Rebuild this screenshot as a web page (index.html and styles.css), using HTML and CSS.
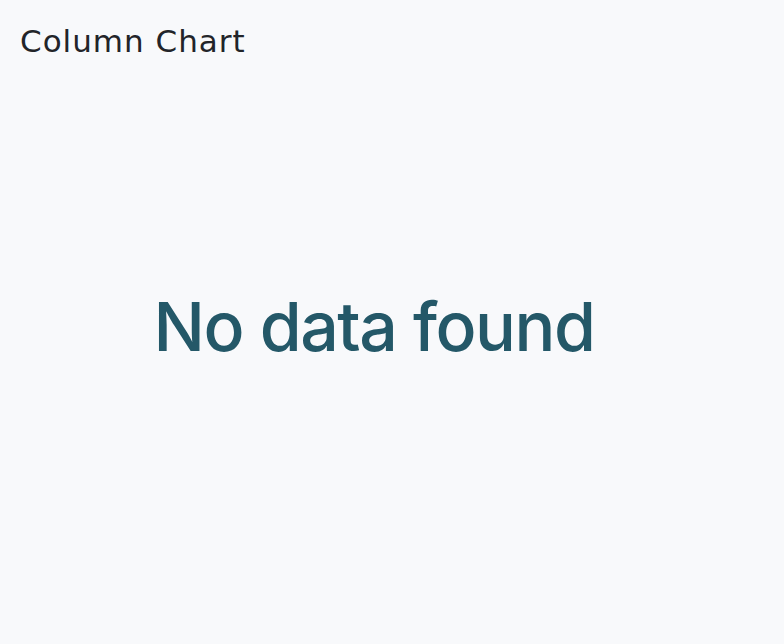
FILE: index.html
```html
<!DOCTYPE html>
<html>
<head>
<meta charset="utf-8">
<link rel="stylesheet" href="styles.css">
</head>
<body>
<div class="card">
  <h2 class="title">Column Chart</h2>
  <div class="empty">No data found</div>
</div>
</body>
</html>
```
FILE: styles.css
```css
html, body { margin: 0; padding: 0; }
body { background: #f8f9fb; width: 784px; height: 644px; overflow: hidden; }
.card { display: flex; flex-direction: column; height: 644px; padding: 0 20px; box-sizing: border-box; }
.title { margin: 22px 0 0; font-family: "DejaVu Sans", sans-serif; font-weight: 400; font-size: 31px; line-height: 38px; color: #222429; letter-spacing: 1px; }
.empty { flex: 1; display: flex; align-items: center; justify-content: center; font-family: "Inter", sans-serif; font-weight: 500; font-size: 68px; letter-spacing: -1.5px; color: #245868; padding: 0 36px 53px 0; }
```
